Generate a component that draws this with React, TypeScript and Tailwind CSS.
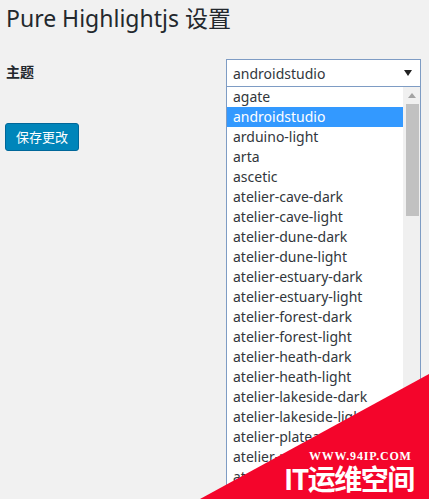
import * as React from "react"

const THEMES = [
    "agate",
    "androidstudio",
    "arduino-light",
    "arta",
    "ascetic",
    "atelier-cave-dark",
    "atelier-cave-light",
    "atelier-dune-dark",
    "atelier-dune-light",
    "atelier-estuary-dark",
    "atelier-estuary-light",
    "atelier-forest-dark",
    "atelier-forest-light",
    "atelier-heath-dark",
    "atelier-heath-light",
    "atelier-lakeside-dark",
    "atelier-lakeside-light",
    "atelier-plateau-dark",
    "atelier-plateau-light",
    "atelier-savanna-dark",
    "atelier-savanna-light",
]

export default function App() {
    const [theme, setTheme] = React.useState("androidstudio")

    return (
        <div className="relative w-[429px] h-[499px] overflow-hidden bg-[#f1f1f1] text-[#23282d] font-['Noto_Sans','Noto_Sans_CJK_SC',sans-serif]">
            {/* Title */}
            <h1 className="mt-[2px] pl-[6px] h-[32px] leading-[32px] text-[23px] font-normal">
                Pure Highlightjs 设置
            </h1>

            {/* Settings row */}
            <div className="mt-[25px] flex">
                <div className="w-[226px] pl-[6px] pt-[3px] text-[14px] leading-[20px] font-bold">主题</div>
                <div className="relative w-[195px]">
                    <div className="h-[28px] flex items-center justify-between pl-[6px] pr-[8px] bg-white border border-[#7e9cc4] text-[14px] text-[#32373c]">
                        <span>{theme}</span>
                        <svg width="8" height="6" viewBox="0 0 8 6">
                            <path d="M0 0 H8 L4 6 Z" fill="#222" />
                        </svg>
                    </div>

                    {/* Open dropdown list */}
                    <div className="absolute left-0 top-[28px] w-[195px] h-[430px] flex bg-white border border-[#7e9cc4] border-t-0">
                        <ul className="flex-1 overflow-hidden">
                            {THEMES.map((t) => (
                                <li
                                    key={t}
                                    onClick={() => setTheme(t)}
                                    className={
                                        t === theme
                                            ? "h-[20px] leading-[20px] pl-[6px] text-[14px] whitespace-nowrap bg-[#3399ff] text-white"
                                            : "h-[20px] leading-[20px] pl-[6px] text-[14px] whitespace-nowrap text-[#32373c]"
                                    }
                                >
                                    {t}
                                </li>
                            ))}
                        </ul>
                        {/* Scrollbar */}
                        <div className="w-[17px] bg-[#f0f0f0] flex flex-col items-center">
                            <svg className="mt-[6px]" width="8" height="5" viewBox="0 0 8 5">
                                <path d="M4 0 L8 5 H0 Z" fill="#a3a3a3" />
                            </svg>
                            <div className="mt-[6px] ml-[1px] w-[13px] h-[112px] bg-[#c1c1c1]" />
                        </div>
                    </div>
                </div>
            </div>

            {/* Save button */}
            <button className="ml-[5px] mt-[36px] h-[28px] px-[10px] rounded-[3px] bg-[#0085ba] border border-[#006799] text-white text-[13px] leading-[26px]">
                保存更改
            </button>

            {/* Watermark */}
            <div className="absolute inset-0 pointer-events-none">
                <svg className="absolute left-0 top-0" width="429" height="499" viewBox="0 0 429 499">
                    <polygon points="200,499 429,374 429,499" fill="#f4052b" />
                </svg>
                <div className="absolute left-[309px] top-[449px] text-white text-[12px] leading-[14px] font-bold font-['Liberation_Serif',serif] tracking-[0.8px] whitespace-nowrap">
                    WWW.94IP.COM
                </div>
                <div className="absolute left-[284px] top-[461px] text-white text-[28px] leading-[34px] font-bold tracking-[-1.5px] whitespace-nowrap font-['Noto_Sans_CJK_SC',sans-serif]">
                    IT运维空间
                </div>
            </div>
        </div>
    )
}
